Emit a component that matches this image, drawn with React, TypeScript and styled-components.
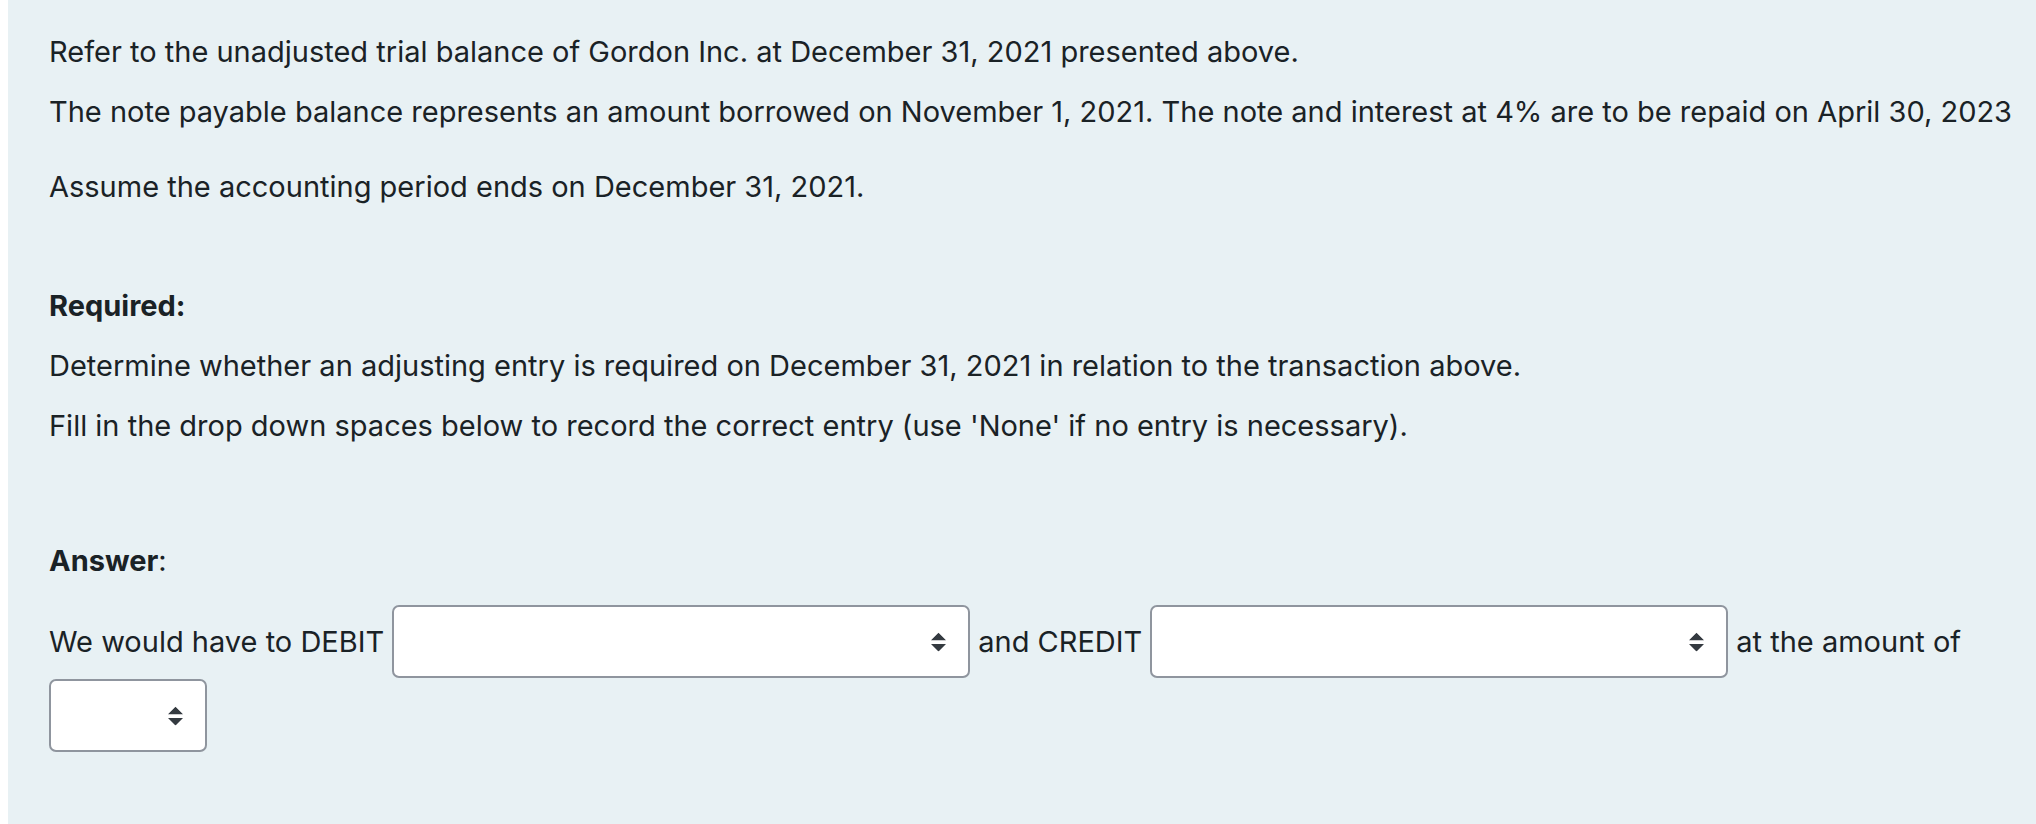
import React from "react";
import styled, { createGlobalStyle } from "styled-components";

const GlobalStyle = createGlobalStyle`
  html, body {
    margin: 0;
    padding: 0;
    background: #ffffff;
  }
  body {
    font-family: Inter, "Noto Sans", "Liberation Sans", sans-serif;
    color: #1a2226;
  }
`;

const Page = styled.div`
  padding-left: 8px;
  min-height: 824px;
  display: flex;
`;

const Formulation = styled.div`
  flex: 1;
  background: #e8f1f4;
  padding: 32px 24px 40px 41px;
  min-height: 824px;
  box-sizing: border-box;
  display: flex;
  flex-direction: column;
  align-items: flex-start;
`;

const Para = styled.p<{ $gap?: number }>`
  margin: ${(p) => p.$gap ?? 0}px 0 0 0;
  font-size: 29px;
  line-height: 40px;
  white-space: nowrap;
`;

const Strong = styled.strong`
  font-weight: 700;
`;

const AnswerRow = styled.div`
  margin-top: 24px;
  display: flex;
  flex-wrap: wrap;
  align-items: center;
  column-gap: 8px;
  row-gap: 1px;
  width: 100%;
  font-size: 29px;
  line-height: 40px;
`;

const Label = styled.span`
  white-space: nowrap;
`;

const SelectWrap = styled.div<{ $w: number }>`
  position: relative;
  width: ${(p) => p.$w}px;
  height: 73px;
  flex: none;
`;

const NativeSelect = styled.select`
  appearance: none;
  -webkit-appearance: none;
  width: 100%;
  height: 100%;
  box-sizing: border-box;
  border: 2px solid #8f959e;
  border-radius: 7px;
  background: #ffffff;
  font: inherit;
  color: #1a2226;
  padding: 0 48px 0 16px;
  outline: none;
`;

const Arrow = styled.svg`
  position: absolute;
  right: 24px;
  top: 50%;
  transform: translateY(-50%);
  pointer-events: none;
`;

const Select: React.FC<{ w: number }> = ({ w }) => (
  <SelectWrap $w={w}>
    <NativeSelect defaultValue="">
      <option value=""></option>
    </NativeSelect>
    <Arrow width="15" height="19" viewBox="0 0 4 5">
      <path d="M2 0L0 2h4zm0 5L0 3h4z" fill="#343a40" />
    </Arrow>
  </SelectWrap>
);

export default function App() {
  return (
    <>
      <GlobalStyle />
      <Page>
        <Formulation>
          <Para>
            Refer to the unadjusted trial balance of Gordon Inc. at December 31, 2021 presented above.
          </Para>
          <Para $gap={20}>
            The note payable balance represents an amount borrowed on November 1, 2021. The note and interest at 4% are to be repaid on April 30, 2023
          </Para>
          <Para $gap={35}>Assume the accounting period ends on December 31, 2021.</Para>
          <Para $gap={79}>
            <Strong>Required:</Strong>
          </Para>
          <Para $gap={20}>
            Determine whether an adjusting entry is required on December 31, 2021 in relation to the transaction above.
          </Para>
          <Para $gap={20}>
            Fill in the drop down spaces below to record the correct entry (use 'None' if no entry is necessary).
          </Para>
          <Para $gap={95}>
            <Strong>Answer</Strong>:
          </Para>
          <AnswerRow>
            <Label>We would have to DEBIT</Label>
            <Select w={578} />
            <Label>and CREDIT</Label>
            <Select w={578} />
            <Label>at the amount of</Label>
            <Select w={158} />
          </AnswerRow>
        </Formulation>
      </Page>
    </>
  );
}
